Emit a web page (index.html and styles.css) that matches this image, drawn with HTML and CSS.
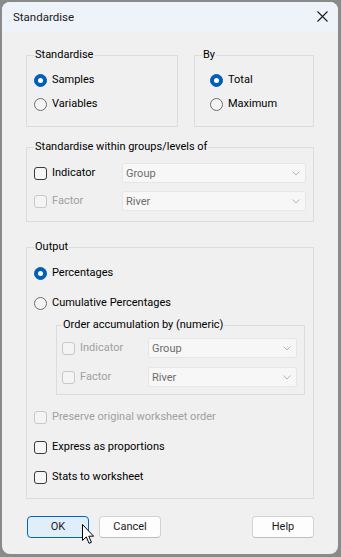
FILE: index.html
```html
<!DOCTYPE html>
<html lang="en">
<head>
<meta charset="utf-8">
<title>Standardise</title>
<link rel="stylesheet" href="styles.css">
</head>
<body>
<div class="window">
  <div class="titlebar">
    <span class="title">Standardise</span>
    <svg class="close" width="11" height="11" viewBox="0 0 11 11"><path d="M0.5 0.5 L10.5 10.5 M10.5 0.5 L0.5 10.5" stroke="#1a1a1a" stroke-width="1.1" fill="none"/></svg>
  </div>
  <div class="content">
    <div class="top-row">
      <fieldset class="group g-std">
        <legend>Standardise</legend>
        <div class="opt row24"><span class="radio checked"></span>Samples</div>
        <div class="opt row24"><span class="radio"></span>Variables</div>
      </fieldset>
      <fieldset class="group g-by">
        <legend>By</legend>
        <div class="opt row24 indent"><span class="radio checked"></span>Total</div>
        <div class="opt row24 indent"><span class="radio"></span>Maximum</div>
      </fieldset>
    </div>

    <fieldset class="group g-within">
      <legend>Standardise within groups/levels of</legend>
      <div class="field-row">
        <div class="opt label88"><span class="check"></span>Indicator</div>
        <div class="select">Group<svg class="chev" width="8" height="5" viewBox="0 0 8 5"><path d="M0.5 0.5 L4 4 L7.5 0.5" stroke="#b4b4b4" fill="none"/></svg></div>
      </div>
      <div class="field-row second">
        <div class="opt label88 disabled"><span class="check"></span>Factor</div>
        <div class="select">River<svg class="chev" width="8" height="5" viewBox="0 0 8 5"><path d="M0.5 0.5 L4 4 L7.5 0.5" stroke="#b4b4b4" fill="none"/></svg></div>
      </div>
    </fieldset>

    <fieldset class="group g-output">
      <legend>Output</legend>
      <div class="opt row24"><span class="radio checked"></span>Percentages</div>
      <div class="opt row24 gap6"><span class="radio"></span>Cumulative Percentages</div>
      <fieldset class="group g-order">
        <legend>Order accumulation by (numeric)</legend>
        <div class="field-row">
          <div class="opt label86 disabled"><span class="check"></span>Indicator</div>
          <div class="select">Group<svg class="chev" width="8" height="5" viewBox="0 0 8 5"><path d="M0.5 0.5 L4 4 L7.5 0.5" stroke="#b4b4b4" fill="none"/></svg></div>
        </div>
        <div class="field-row second9">
          <div class="opt label86 disabled"><span class="check"></span>Factor</div>
          <div class="select">River<svg class="chev" width="8" height="5" viewBox="0 0 8 5"><path d="M0.5 0.5 L4 4 L7.5 0.5" stroke="#b4b4b4" fill="none"/></svg></div>
        </div>
      </fieldset>
      <div class="opt row24 after-sub disabled"><span class="check"></span>Preserve original worksheet order</div>
      <div class="opt row24 gap6"><span class="check"></span>Express as proportions</div>
      <div class="opt row24 gap6"><span class="check"></span>Stats to worksheet</div>
    </fieldset>

    <div class="buttons">
      <button class="btn default">OK</button>
      <button class="btn">Cancel</button>
      <span class="spacer"></span>
      <button class="btn">Help</button>
    </div>
  </div>
  <svg class="cursor" width="14" height="22" viewBox="0 0 14 22"><path d="M0.5 0.5 V16.5 L4.3 12.9 L7 19.3 L9.4 18.3 L6.8 12.2 H11.6 Z" fill="#ffffff" stroke="#000000" stroke-width="1" stroke-linejoin="miter"/></svg>
</div>
</body>
</html>
```

FILE: styles.css
```css
* { box-sizing: border-box; }

html, body {
  margin: 0;
  height: 100%;
}

body {
  background: #8a8a8a;
  padding: 2px 3px 3px 2px;
  font-family: "Segoe UI", Roboto, "Liberation Sans", Arial, sans-serif;
  font-size: 11px;
  color: #000;
}

.window {
  position: relative;
  width: 336px;
  height: 552px;
  background: #f0f0f0;
  border-radius: 8px;
  overflow: hidden;
}

.titlebar {
  height: 30px;
  background: #eef3fa;
  display: flex;
  align-items: center;
  justify-content: space-between;
  padding: 0 10px 0 11px;
}

.title {
  font-size: 11.5px;
  color: #1a1a1a;
  line-height: 16px;
  margin-top: -1px;
}

.close {
  display: block;
  margin-top: -1px;
}

.content {
  padding: 15px 24px 0 24px;
  display: flex;
  flex-direction: column;
}

.top-row {
  display: flex;
  gap: 16px;
}

.group {
  margin: 0;
  min-width: 0;
  border: 1px solid #dcdcdc;
  padding: 0 7px 0 7px;
}

.group legend {
  padding: 0 1px;
  line-height: 16px;
  font-size: 11px;
  color: #000;
}

.g-std {
  width: 152px;
  padding-top: 5px;
  padding-bottom: 10px;
}

.g-by {
  width: 120px;
  padding-top: 5px;
  padding-bottom: 10px;
}

.indent { margin-left: 8px; }

.g-within {
  margin-top: 12px;
  padding-top: 8px;
  padding-bottom: 10px;
}

.g-output {
  margin-top: 17px;
  padding-top: 6px;
  padding-bottom: 9px;
  padding-right: 8px;
}

.g-order {
  margin-top: 2px;
  margin-left: 22px;
  padding: 5px 7px 7px 5px;
}

.opt {
  display: flex;
  align-items: center;
  gap: 5px;
  white-space: nowrap;
  line-height: 16px;
}

.row24 { height: 24px; }
.gap6 { margin-top: 6px; }
.after-sub { margin-top: 10px; }

.field-row {
  display: flex;
  align-items: center;
  height: 20px;
}
.field-row.second { margin-top: 8px; }
.field-row.second9 { margin-top: 9px; }

.label88 { width: 88px; flex: none; }
.label86 { width: 86px; flex: none; }

.select {
  flex: 1;
  height: 20px;
  background: #f7f7f7;
  border: 1px solid #e6e6e6;
  border-radius: 2px;
  display: flex;
  align-items: center;
  justify-content: space-between;
  padding: 0 5px 0 3px;
  color: #6d6d6d;
}

.chev { display: block; }

.radio {
  width: 13px;
  height: 13px;
  flex: none;
  border-radius: 50%;
  border: 1px solid #6c6c6c;
  background: #f4f4f4;
  position: relative;
}

.radio.checked {
  background: #005fb8;
  border-color: #005fb8;
}

.radio.checked::after {
  content: "";
  position: absolute;
  left: 3px;
  top: 3px;
  width: 5px;
  height: 5px;
  border-radius: 50%;
  background: #ffffff;
}

.check {
  width: 13px;
  height: 13px;
  flex: none;
  border-radius: 3px;
  border: 1px solid #3a3a3a;
  background: #f6f6f6;
}

.disabled { color: #a0a0a0; }
.disabled .check { border-color: #c8c8c8; background: #f4f4f4; }

.buttons {
  margin-top: 17px;
  display: flex;
  gap: 10px;
  padding-left: 1px;
}

.spacer { flex: 1; }

.btn {
  width: 62px;
  height: 22px;
  font-family: inherit;
  font-size: 11px;
  color: #1a1a1a;
  background: #fdfdfd;
  border: 1px solid #d2d2d2;
  border-bottom-color: #bdbdbd;
  border-radius: 4px;
  padding: 0;
  line-height: 18px;
}

.btn.default {
  background: #e0eef9;
  border: 1px solid #0067c0;
}

.cursor {
  position: absolute;
  left: 80px;
  top: 522px;
  display: block;
}
```
